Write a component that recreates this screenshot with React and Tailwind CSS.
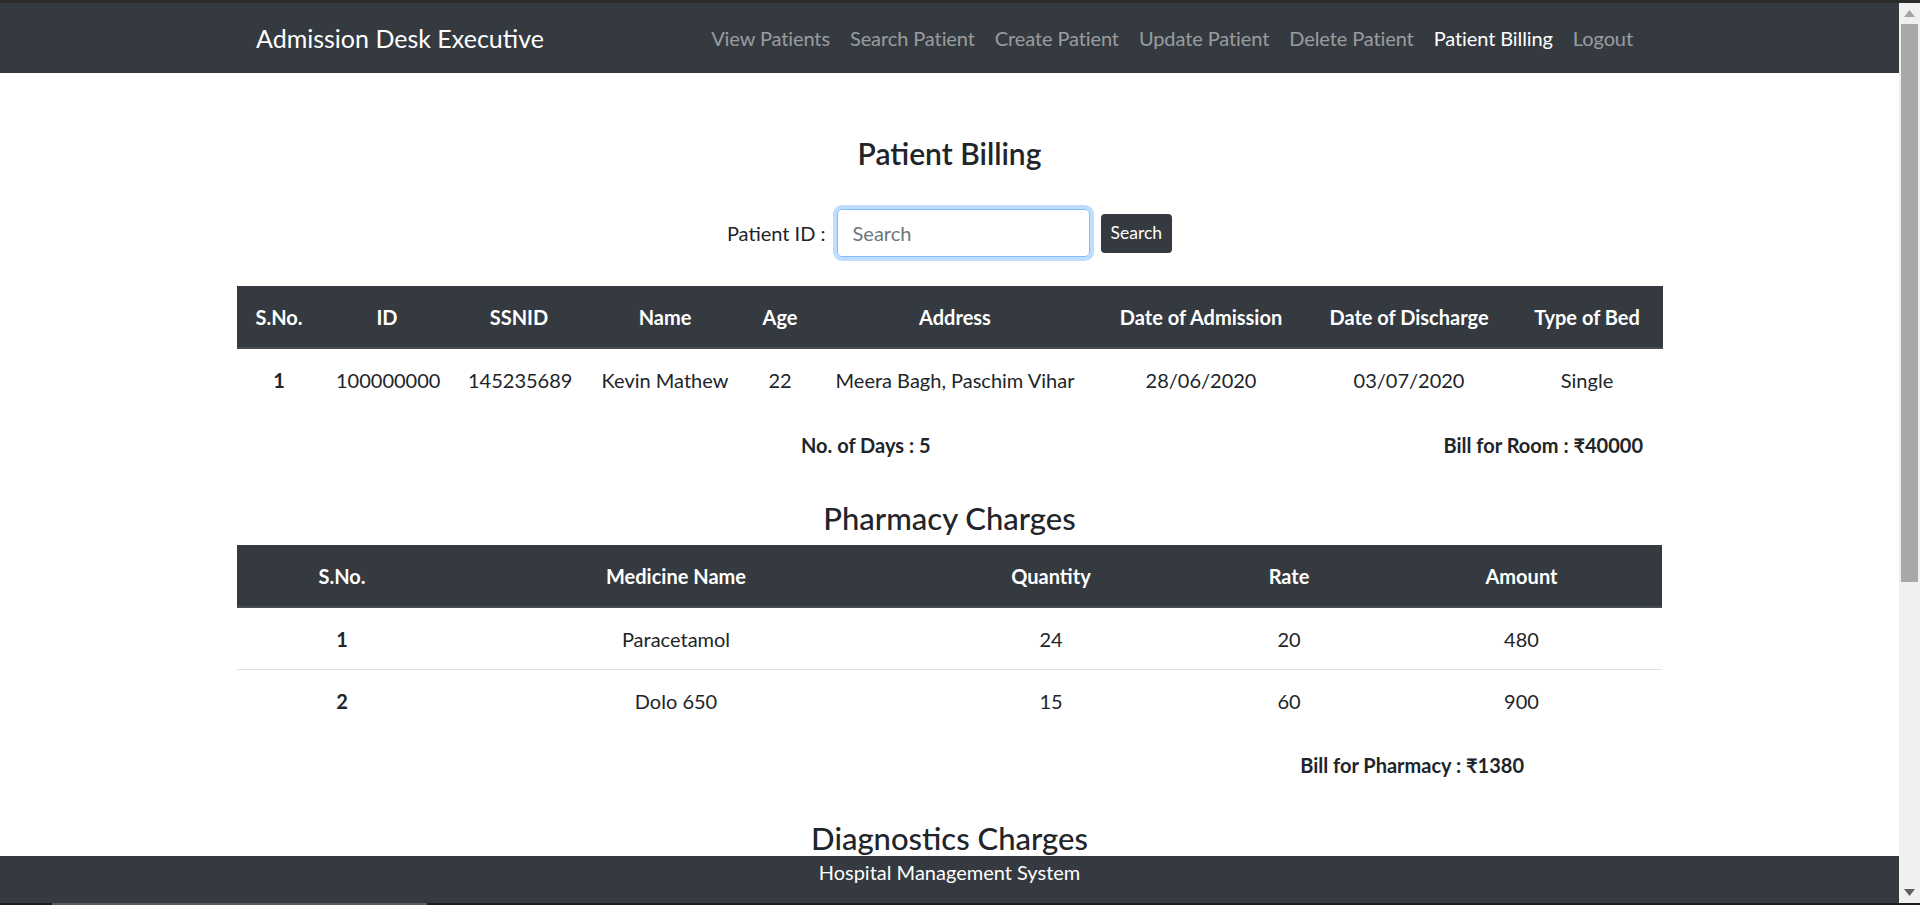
import React from 'react';

const navLinks = ['View Patients', 'Search Patient', 'Create Patient', 'Update Patient', 'Delete Patient', 'Patient Billing', 'Logout'];

const patientCols = [
  { label: 'S.No.', w: 'w-[84px]' },
  { label: 'ID', w: 'w-[132px]' },
  { label: 'SSNID', w: 'w-[132px]' },
  { label: 'Name', w: 'w-[160px]' },
  { label: 'Age', w: 'w-[70px]' },
  { label: 'Address', w: 'w-[280px]' },
  { label: 'Date of Admission', w: 'w-[212px]' },
  { label: 'Date of Discharge', w: 'w-[204px]' },
  { label: 'Type of Bed', w: 'w-[152px]' },
];

const patientRow = ['1', '100000000', '145235689', 'Kevin Mathew', '22', 'Meera Bagh, Paschim Vihar', '28/06/2020', '03/07/2020', 'Single'];

const pharmacyCols = [
  { label: 'S.No.', w: 'w-[210px]' },
  { label: 'Medicine Name', w: 'w-[458px]' },
  { label: 'Quantity', w: 'w-[292px]' },
  { label: 'Rate', w: 'w-[184px]' },
  { label: 'Amount', w: 'w-[281px]' },
];

const pharmacyRows = [
  ['1', 'Paracetamol', '24', '20', '480'],
  ['2', 'Dolo 650', '15', '60', '900'],
];

function DataTable({ cols, rows, rowBorders = true }) {
  return (
    <table className="w-full table-fixed border-collapse">
      <colgroup>
        {cols.map((c) => (
          <col key={c.label} className={c.w} />
        ))}
      </colgroup>
      <thead>
        <tr className="bg-[#343a40] text-white">
          {cols.map((c) => (
            <th key={c.label} className="px-[15px] py-[15.5px] leading-[30px] font-bold text-center border-b-2 border-[#454d55] whitespace-nowrap">
              {c.label}
            </th>
          ))}
        </tr>
      </thead>
      <tbody>
        {rows.map((r, i) => (
          <tr key={i} className={rowBorders ? 'border-t border-[#dee2e6]' : ''}>
            {r.map((cell, j) => (
              <td key={j} className={`px-[15px] py-[15.5px] leading-[30px] text-center whitespace-nowrap ${j === 0 ? 'font-bold' : ''}`}>
                {cell}
              </td>
            ))}
          </tr>
        ))}
      </tbody>
    </table>
  );
}

function Scrollbar() {
  return (
    <div className="w-[21px] bg-[#f0f0f0] flex flex-col items-center">
      <div className="h-[21px] flex items-center justify-center">
        <svg width="11" height="7" viewBox="0 0 11 7"><polygon points="5.5,0 11,7 0,7" fill="#a3a3a3" /></svg>
      </div>
      <div className="w-[17px] h-[558px] bg-[#a8a8a8]" />
      <div className="flex-1" />
      <div className="h-[21px] flex items-center justify-center">
        <svg width="11" height="7" viewBox="0 0 11 7"><polygon points="0,0 11,0 5.5,7" fill="#606060" /></svg>
      </div>
    </div>
  );
}

export default function App() {
  return (
    <div className="h-[905px] w-[1920px] flex flex-col overflow-hidden bg-white text-[#212529] text-[20px] leading-[30px]" style={{ fontFamily: 'Lato, "Noto Sans", "DejaVu Sans", sans-serif' }}>
      {/* top edge */}
      <div className="h-[3px] bg-[#2b2b2b]" />

      <div className="flex-1 flex min-h-0">
        <div className="flex-1 flex flex-col min-w-0">
          {/* Navbar */}
          <nav className="h-[70px] bg-[#343a40] shrink-0">
            <div className="w-[1425px] mx-auto px-[19px] h-full flex items-center justify-between">
              <span className="text-white text-[25px] leading-[37px]">Admission Desk Executive</span>
              <ul className="flex items-center tracking-[-0.1px]">
                {navLinks.map((l) => (
                  <li key={l} className={`px-[10px] ${l === 'Patient Billing' ? 'text-white' : 'text-white/50'}`}>
                    {l}
                  </li>
                ))}
              </ul>
            </div>
          </nav>

          {/* Content */}
          <main className="flex-1 min-h-0 overflow-hidden">
            <div className="w-[1425px] mx-auto">
              <h4 className="mt-[62px] text-center text-[30px] leading-[36px] font-semibold">Patient Billing</h4>

              <div className="mt-[38px] flex items-center justify-center">
                <label className="mr-[11px]">Patient ID :</label>
                <input
                  type="text"
                  placeholder="Search"
                  className="w-[253px] h-[48px] px-[15px] rounded-[5px] border border-[#80bdff] shadow-[0_0_0_4px_rgba(0,123,255,0.25)] outline-none placeholder-[#6c757d] text-[20px]"
                />
                <button className="ml-[11px] h-[39px] px-[10px] rounded-[4px] bg-[#343a40] text-white text-[17.5px] leading-[26px]">
                  Search
                </button>
              </div>

              <div className="mt-[29px]">
                <DataTable cols={patientCols} rows={[patientRow]} rowBorders={false} />
              </div>

              <div className="mt-[20px] grid grid-cols-2 font-bold">
                <div className="text-right pr-[19px]">No. of Days : 5</div>
                <div className="text-right pr-[19px]">Bill for Room : ₹40000</div>
              </div>

              <h3 className="mt-[37px] text-center text-[31px] leading-[42px] font-medium">Pharmacy Charges</h3>
              <div className="mt-[6px]">
                <DataTable cols={pharmacyCols} rows={pharmacyRows} />
              </div>

              <div className="mt-[19px] flex justify-end pr-[138px] font-bold">Bill for Pharmacy : ₹1380</div>

              <h3 className="mt-[37px] text-center text-[31px] leading-[42px] font-medium">Diagnostics Charges</h3>
            </div>
          </main>

          {/* Footer */}
          <footer className="h-[47px] shrink-0 bg-[#343a40] text-white text-center pt-[1px]">
            Hospital Management System
          </footer>
        </div>
        <Scrollbar />
      </div>

      {/* bottom edge */}
      <div className="h-[2px] bg-[#1e1e1e] flex">
        <div className="ml-[52px] w-[375px] bg-[#5a5a5a]" />
      </div>
    </div>
  );
}
